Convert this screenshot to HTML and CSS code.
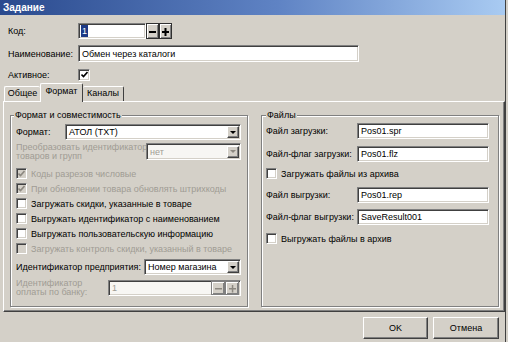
FILE: index.html
```html
<!doctype html>
<html lang="ru">
<head>
    <meta charset="UTF-8">
    <title>Задание</title>
    <link rel="stylesheet" href="styles.css">
</head>
<body>
    <div class="window">
        <div class="titlebar">Задание</div>

        <div class="head">
            <div class="frow row-code">
                <span class="lbl">Код:</span>
                <div class="field code-field"><span class="sel">1</span></div>
                <span class="sbtn"><svg width="9" height="9"><rect x="1" y="4" width="7" height="2"/></svg></span>
                <span class="sbtn"><svg width="9" height="9"><rect x="1" y="4" width="7" height="2"/><rect x="3.5" y="1" width="2" height="8"/></svg></span>
            </div>
            <div class="frow row-name">
                <span class="lbl">Наименование:</span>
                <div class="field name-field">Обмен через каталоги</div>
            </div>
            <div class="frow row-active">
                <span class="lbl">Активное:</span>
                <span class="cb cb-big"><svg width="7" height="7"><path d="M0.5 3.5l2 2l4-4.5"/></svg></span>
            </div>
        </div>

        <div class="tabs">
            <span class="tab tab-common">Общее</span>
            <span class="tab tab-format active">Формат</span>
            <span class="tab tab-channels">Каналы</span>
        </div>

        <div class="panel">
            <div class="group group-left">
                <span class="legend">Формат и совместимость</span>

                <div class="frow h16 mt3">
                    <span class="w49">Формат:</span>
                    <div class="field combo w176">
                        <span>АТОЛ (TXT)</span>
                        <span class="drop"><svg width="6" height="3"><path d="M0 0h6L3 3z"/></svg></span>
                    </div>
                </div>
                <div class="frow h17 mt3">
                    <span class="w130 two-line disabled">Преобразовать идентификатор<br>товаров и групп</span>
                    <div class="field combo w95 off">
                        <span>нет</span>
                        <span class="drop"><svg width="6" height="3"><path d="M0 0h6L3 3z"/></svg></span>
                    </div>
                </div>

                <div class="checks mt6">
                    <div class="cbrow disabled"><span class="cb off"><svg width="7" height="7"><path d="M0.5 3.5l2 2l4-4.5"/></svg></span>Коды разрезов числовые</div>
                    <div class="cbrow disabled"><span class="cb off"><svg width="7" height="7"><path d="M0.5 3.5l2 2l4-4.5"/></svg></span>При обновлении товара обновлять штрихкоды</div>
                    <div class="cbrow"><span class="cb"></span>Загружать скидки, указанные в товаре</div>
                    <div class="cbrow"><span class="cb"></span>Выгружать идентификатор с наименованием</div>
                    <div class="cbrow"><span class="cb"></span>Выгружать пользовательскую информацию</div>
                    <div class="cbrow disabled"><span class="cb off"></span>Загружать контроль скидки, указанный в товаре</div>
                </div>

                <div class="frow h16 mt3">
                    <span class="w128">Идентификатор предприятия:</span>
                    <div class="field combo w97">
                        <span>Номер магазина</span>
                        <span class="drop"><svg width="6" height="3"><path d="M0 0h6L3 3z"/></svg></span>
                    </div>
                </div>
                <div class="frow h16 mt5">
                    <span class="w92 two-line disabled">Идентификатор<br>оплаты по банку:</span>
                    <div class="field spin w133 off">
                        <span class="grow">1</span>
                        <span class="sbtn small"><svg width="9" height="9"><rect x="1" y="4" width="7" height="1.5"/></svg></span>
                        <span class="sbtn small"><svg width="9" height="9"><rect x="1" y="4" width="7" height="1.5"/><rect x="3.8" y="1" width="1.5" height="7.5"/></svg></span>
                    </div>
                </div>
            </div>

            <div class="group group-right">
                <span class="legend">Файлы</span>

                <div class="frow h16 mt2">
                    <span class="w91">Файл загрузки:</span>
                    <div class="field w133">Pos01.spr</div>
                </div>
                <div class="frow h16 mt7">
                    <span class="w91">Файл-флаг загрузки:</span>
                    <div class="field w133">Pos01.flz</div>
                </div>
                <div class="cbrow mt4"><span class="cb"></span>Загружать файлы из архива</div>
                <div class="frow h16 mt6">
                    <span class="w91">Файл выгрузки:</span>
                    <div class="field w133">Pos01.rep</div>
                </div>
                <div class="frow h16 mt6">
                    <span class="w91">Файл-флаг выгрузки:</span>
                    <div class="field w133">SaveResult001</div>
                </div>
                <div class="cbrow mt6"><span class="cb"></span>Выгружать файлы в архив</div>
            </div>
        </div>

        <div class="buttons">
            <span class="btn btn-ok">OK</span>
            <span class="btn btn-cancel">Отмена</span>
        </div>
    </div>
</body>
</html>
```

FILE: styles.css
```css
body {
    margin: 0;
    background: #d4d0c8;
    font-family: "Liberation Sans", Arial, sans-serif;
    font-size: 9px;
    color: #000;
}
.window {
    width: 505px;
    height: 342px;
    border-right: 1px solid #404040;
}
.titlebar {
    height: 15px;
    line-height: 15px;
    padding-left: 3px;
    color: #fff;
    font-weight: bold;
    font-size: 10px;
    background: linear-gradient(to right, #2a4a8e, #5f83c4 55%, #a9cbf2);
}
.head {
    padding: 8px 0 0 8px;
}
.frow {
    display: flex;
    align-items: center;
}
.head .lbl {
    width: 70px;
}
.row-code {
    height: 16px;
}
.row-name {
    height: 17px;
    margin-top: 6px;
}
.row-active {
    height: 13px;
    margin-top: 6px;
}

.field {
    box-sizing: border-box;
    height: 100%;
    background: #fff;
    border: 1px solid;
    border-color: #808080 #fff #fff #808080;
    box-shadow: inset 1px 1px #404040, inset -1px -1px #d4d0c8;
    padding: 0 3px;
    display: flex;
    align-items: center;
    white-space: nowrap;
    overflow: hidden;
}
.field.off {
    background: #f7f6f3;
    color: #a09c94;
}
.code-field {
    width: 68px;
    padding-left: 2px;
}
.sel {
    background: #1d3a86;
    color: #fff;
    padding: 0 1px;
    line-height: 12px;
}
.name-field {
    width: 281px;
}

.sbtn {
    box-sizing: border-box;
    width: 13px;
    height: 16px;
    border: 1px solid #303030;
    background: #d4d0c8;
    box-shadow: inset 1px 1px #fff, inset -1px -1px #808080;
    display: flex;
    align-items: center;
    justify-content: center;
}
.sbtn svg {
    fill: #000;
}
.sbtn.small {
    width: 14px;
    height: 14px;
    border-color: #808080;
}
.sbtn.small svg {
    fill: #8c8880;
}

.cb {
    box-sizing: border-box;
    width: 11px;
    height: 11px;
    flex: none;
    background: #fff;
    border: 1px solid;
    border-color: #808080 #fff #fff #808080;
    box-shadow: inset 1px 1px #404040, inset -1px -1px #d4d0c8;
    display: flex;
    align-items: center;
    justify-content: center;
}
.cb-big {
    width: 12px;
    height: 12px;
}
.cb svg path {
    fill: none;
    stroke: #000;
    stroke-width: 1.6;
}
.cb.off {
    background: #d4d0c8;
}
.cb.off svg path {
    stroke: #8c8880;
}

.tabs {
    display: flex;
    align-items: flex-end;
    height: 18px;
    margin-top: 2px;
    padding-left: 4px;
}
.tab {
    box-sizing: border-box;
    height: 15px;
    line-height: 13px;
    text-align: center;
    border-top: 1px solid #fff;
    border-left: 1px solid #fff;
    border-right: 1px solid #404040;
    border-radius: 2px 2px 0 0;
    background: #d4d0c8;
}
.tab-common {
    width: 36px;
    border-right: none;
}
.tab-format {
    width: 43px;
}
.tab-channels {
    width: 41px;
    border-left: none;
}
.tab.active {
    height: 19px;
    line-height: 15px;
    margin-bottom: -1px;
    position: relative;
    z-index: 1;
}

.panel {
    box-sizing: border-box;
    margin-left: 3px;
    width: 502px;
    height: 211px;
    border: 1px solid;
    border-color: #fff #404040 #404040 #fff;
    box-shadow: inset -1px -1px #808080;
    padding: 13px 4px 0 6px;
    display: flex;
    gap: 13px;
}
.group {
    box-sizing: border-box;
    width: 238px;
    height: 192px;
    border: 1px solid #808080;
    box-shadow: inset 1px 1px #fff, 1px 1px #fff;
    display: flex;
    flex-direction: column;
}
.group-left {
    padding: 0 6px 0 5px;
}
.group-right {
    padding: 0 9px 0 4px;
}
.legend {
    align-self: flex-start;
    margin: -6px 0 0 -2px;
    padding: 0 1px;
    line-height: 11px;
    background: #d4d0c8;
}
.group-right .legend {
    margin-left: 0;
}

.combo {
    justify-content: space-between;
    padding-right: 1px;
}
.drop {
    box-sizing: border-box;
    width: 12px;
    height: 12px;
    background: #d4d0c8;
    border: 1px solid;
    border-color: #fff #404040 #404040 #fff;
    box-shadow: inset -1px -1px #808080;
    display: flex;
    align-items: center;
    justify-content: center;
}
.drop svg {
    fill: #000;
}
.off .drop svg {
    fill: #8c8880;
}
.spin {
    padding-right: 1px;
}
.grow {
    flex: 1;
}

.checks {
    display: flex;
    flex-direction: column;
}
.cbrow {
    display: flex;
    align-items: center;
    gap: 4px;
    height: 15px;
    white-space: nowrap;
}
.disabled {
    color: #a09c94;
}
.two-line {
    line-height: 9px;
    white-space: nowrap;
}

.h16 { height: 16px; }
.h17 { height: 17px; }
.mt2 { margin-top: 2px; }
.mt3 { margin-top: 3px; }
.mt4 { margin-top: 4px; }
.mt5 { margin-top: 5px; }
.mt6 { margin-top: 6px; }
.mt7 { margin-top: 7px; }
.w49 { width: 49px; flex: none; }
.w91 { width: 91px; flex: none; }
.w92 { width: 92px; flex: none; }
.w128 { width: 128px; flex: none; }
.w130 { width: 130px; flex: none; }
.w95 { width: 95px; }
.w97 { width: 97px; }
.w133 { width: 133px; }
.w176 { width: 176px; }

.buttons {
    display: flex;
    justify-content: flex-end;
    gap: 5px;
    margin-top: 5px;
    padding-right: 6px;
}
.btn {
    box-sizing: border-box;
    height: 22px;
    line-height: 20px;
    text-align: center;
    background: #d4d0c8;
    border: 1px solid;
    border-color: #fff #404040 #404040 #fff;
    box-shadow: inset -1px -1px #808080;
}
.btn-ok {
    width: 65px;
}
.btn-cancel {
    width: 66px;
}
```
